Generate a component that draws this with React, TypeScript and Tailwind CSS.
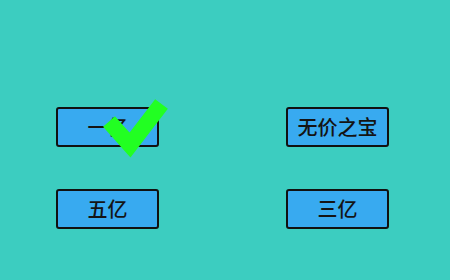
import React from "react";

const Btn = ({ label }: { label: string }) => (
  <div className="w-[103px] h-[40px] border-[2.5px] border-[#111] rounded-[3px] bg-[#38aaf0] flex items-center justify-center text-[20px] leading-none font-medium text-[#141414] [font-family:'Noto_Sans_CJK_SC',sans-serif]">
    {label}
  </div>
);

export default function App() {
  return (
    <div className="relative w-[450px] h-[280px] bg-[#3ccdc0] overflow-hidden">
      <div className="pt-[107px] pl-[56px] grid grid-cols-[103px_103px] gap-x-[127px] gap-y-[42px]">
        <Btn label="一亿" />
        <Btn label="无价之宝" />
        <Btn label="五亿" />
        <Btn label="三亿" />
      </div>
      <svg className="absolute left-0 top-0" width="450" height="280" viewBox="0 0 450 280">
        <polyline
          points="109,121.5 130,145 161.5,104"
          fill="none"
          stroke="#22ff22"
          strokeWidth="16"
          strokeLinejoin="miter"
          strokeLinecap="butt"
        />
      </svg>
    </div>
  );
}
